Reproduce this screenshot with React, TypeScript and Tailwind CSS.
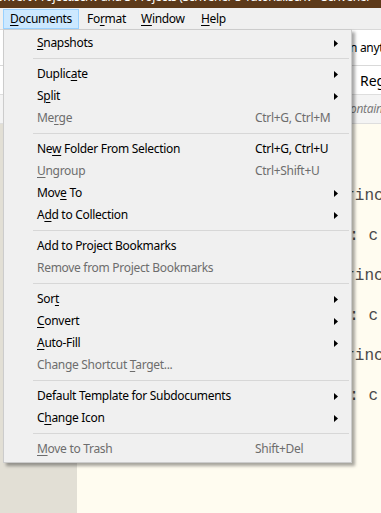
import React from "react";

type Item =
  | { sep: true }
  | {
      sep?: false;
      label: string;
      u?: number; // index of underlined char
      shortcut?: string;
      arrow?: boolean;
      disabled?: boolean;
    };

const items: Item[] = [
  { label: "Snapshots", u: 0, arrow: true },
  { sep: true },
  { label: "Duplicate", u: 6, arrow: true },
  { label: "Split", u: 1, arrow: true },
  { label: "Merge", u: 2, shortcut: "Ctrl+G, Ctrl+M", disabled: true },
  { sep: true },
  { label: "New Folder From Selection", u: 2, shortcut: "Ctrl+G, Ctrl+U" },
  { label: "Ungroup", u: 0, shortcut: "Ctrl+Shift+U", disabled: true },
  { label: "Move To", u: 3, arrow: true },
  { label: "Add to Collection", u: 1, arrow: true },
  { sep: true },
  { label: "Add to Project Bookmarks" },
  { label: "Remove from Project Bookmarks", disabled: true },
  { sep: true },
  { label: "Sort", u: 3, arrow: true },
  { label: "Convert", u: 0, arrow: true },
  { label: "Auto-Fill", u: 0, arrow: true },
  { label: "Change Shortcut Target...", u: 16, disabled: true },
  { sep: true },
  { label: "Default Template for Subdocuments", arrow: true },
  { label: "Change Icon", u: 1, arrow: true },
  { sep: true },
  { label: "Move to Trash", u: 0, shortcut: "Shift+Del", disabled: true },
];

function Label({ text, u }: { text: string; u?: number }) {
  if (u === undefined) return <>{text}</>;
  return (
    <>
      {text.slice(0, u)}
      <span className="underline underline-offset-[2px] decoration-[1px]">{text[u]}</span>
      {text.slice(u + 1)}
    </>
  );
}

function Arrow() {
  return (
    <svg width="4" height="7" viewBox="0 0 4 7" className="block">
      <path d="M0 0 L4 3.5 L0 7 Z" fill="#000" />
    </svg>
  );
}

const pad = "                           "; // 27 spaces

export default function App() {
  return (
    <div className="relative w-[381px] h-[513px] overflow-hidden bg-[#fffcf0] font-['Noto_Sans',sans-serif] text-[12px] tracking-[-0.3px]">
      {/* Title bar */}
      <div className="h-[8px] bg-[#5d3a1a] overflow-hidden">
        <div className="-mt-[9px] flex justify-end pr-[10px] text-white text-[12px] leading-[12px] whitespace-nowrap">
          Convert Project.scriv and 3 Projects (Scrivener 3 Tutorial.scriv - Scrivener
        </div>
      </div>

      {/* Menu bar */}
      <div className="h-[21px] bg-[#f0f0f0] flex items-end text-black">
        <div className="ml-[3px] w-[76px] h-[20px] pl-[6px] bg-[#cce8ff] border border-[#99d1ff] flex items-center">
          <Label text="Documents" u={0} />
        </div>
        <div className="w-[54px] h-[20px] pl-[8px] flex items-center">
          <Label text="Format" u={2} />
        </div>
        <div className="w-[60px] h-[20px] pl-[8px] flex items-center">
          <Label text="Window" u={0} />
        </div>
        <div className="h-[20px] pl-[8px] flex items-center">
          <Label text="Help" u={0} />
        </div>
      </div>

      {/* Toolbar rows behind the menu */}
      <div className="h-[37px] bg-white border-y border-[#d9d9d9] flex items-center pl-[350px] whitespace-nowrap text-black">
        n anything
      </div>
      <div className="h-[28px] bg-white flex items-center pl-[360px] text-[14px] whitespace-nowrap text-black tracking-normal">
        Regular
      </div>
      <div className="h-[30px] bg-[#f4f4f4] border-y border-[#dedede] flex items-center pl-[350px] italic text-[#7a7a7a] whitespace-nowrap">
        ontains
      </div>

      {/* Content */}
      <div className="flex h-[389px]">
        <div className="w-[77px] bg-[#e2dfd5]" />
        <div className="flex-1 bg-[#fffcf0] overflow-hidden pt-[52px] font-['Liberation_Mono',monospace] text-[16px] leading-[40px] text-[#4a4a4a] whitespace-pre tracking-normal">
          <div className="pl-[9px]">{pad + "rinclude"}</div>
          <div className="pl-[13px]">{pad + ": c ont"}</div>
          <div className="pl-[9px]">{pad + "rinclude"}</div>
          <div className="pl-[13px]">{pad + ": c ont"}</div>
          <div className="pl-[9px]">{pad + "rinclude"}</div>
          <div className="pl-[13px]">{pad + ": c ont"}</div>
        </div>
      </div>

      {/* Dropdown menu (overlay) */}
      <div className="absolute left-[3px] top-[29px] w-[349px] bg-[#f0f0f0] border border-[#cccccc] py-[2px] shadow-[3px_3px_3px_rgba(0,0,0,0.35)]">
        {items.map((it, i) =>
          it.sep ? (
            <div key={i} className="h-[9px] flex items-center">
              <div className="ml-[29px] mr-[2px] flex-1 h-px bg-[#d7d7d7]" />
            </div>
          ) : (
            <div
              key={i}
              className={`h-[22px] flex items-center pl-[33px] whitespace-nowrap ${
                it.disabled ? "text-[#6d6d6d]" : "text-black"
              }`}
            >
              <div className="w-[218px]">
                <Label text={it.label} u={it.u} />
              </div>
              <div className="flex-1">{it.shortcut ?? ""}</div>
              <div className="w-[4px] mr-[13px]">{it.arrow ? <Arrow /> : null}</div>
            </div>
          )
        )}
      </div>
    </div>
  );
}
